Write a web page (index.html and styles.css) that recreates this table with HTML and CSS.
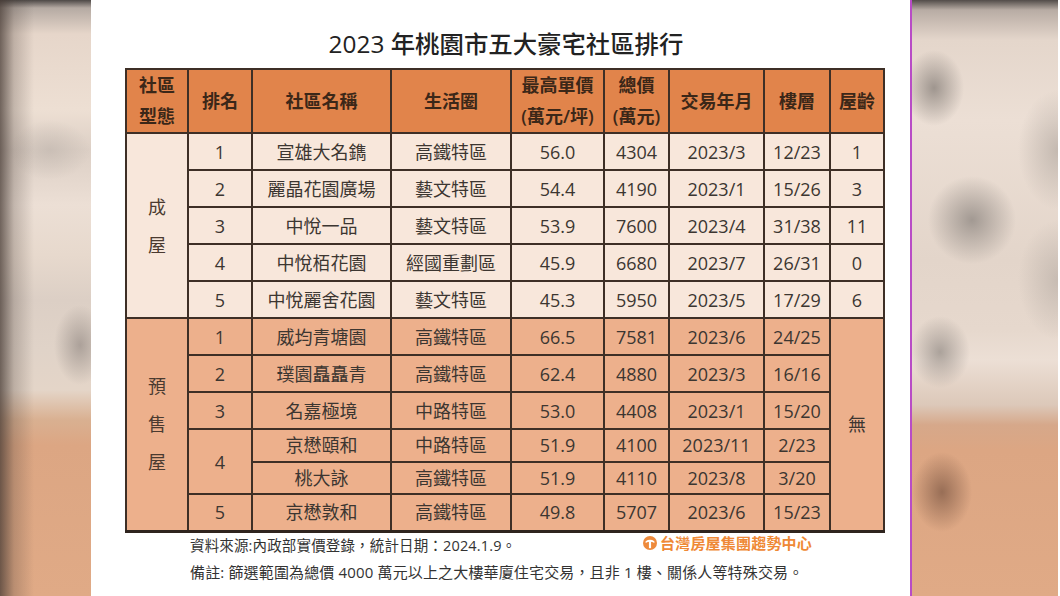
FILE: index.html
```html
<!DOCTYPE html>
<html lang="zh-Hant">
<head>
<meta charset="utf-8">
<title>2023 年桃園市五大豪宅社區排行</title>
<link rel="stylesheet" href="styles.css">
</head>
<body>
<div class="screen">
  <div class="side side-left"></div>
  <main class="panel">
    <h1 class="title">2023 年桃園市五大豪宅社區排行</h1>
    <table class="rank">
      <colgroup>
        <col class="c1"><col class="c2"><col class="c3"><col class="c4"><col class="c5"><col class="c6"><col class="c7"><col class="c8"><col class="c9">
      </colgroup>
      <thead>
        <tr class="head">
          <th>社區<br>型態</th>
          <th>排名</th>
          <th>社區名稱</th>
          <th>生活圈</th>
          <th>最高單價<br>(萬元/坪)</th>
          <th>總價<br>(萬元)</th>
          <th>交易年月</th>
          <th>樓層</th>
          <th>屋齡</th>
        </tr>
      </thead>
      <tbody class="built">
        <tr class="r">
          <td rowspan="5" class="type">成<br>屋</td>
          <td>1</td><td>宣雄大名鐫</td><td>高鐵特區</td><td>56.0</td><td>4304</td><td>2023/3</td><td>12/23</td><td>1</td>
        </tr>
        <tr class="r"><td>2</td><td>麗晶花園廣場</td><td>藝文特區</td><td>54.4</td><td>4190</td><td>2023/1</td><td>15/26</td><td>3</td></tr>
        <tr class="r"><td>3</td><td>中悅一品</td><td>藝文特區</td><td>53.9</td><td>7600</td><td>2023/4</td><td>31/38</td><td>11</td></tr>
        <tr class="r"><td>4</td><td>中悅栢花園</td><td>經國重劃區</td><td>45.9</td><td>6680</td><td>2023/7</td><td>26/31</td><td>0</td></tr>
        <tr class="r"><td>5</td><td>中悅麗舍花園</td><td>藝文特區</td><td>45.3</td><td>5950</td><td>2023/5</td><td>17/29</td><td>6</td></tr>
      </tbody>
      <tbody class="presale">
        <tr class="r">
          <td rowspan="6" class="type">預<br>售<br>屋</td>
          <td>1</td><td>威均青塘園</td><td>高鐵特區</td><td>66.5</td><td>7581</td><td>2023/6</td><td>24/25</td>
          <td rowspan="6" class="none">無</td>
        </tr>
        <tr class="r"><td>2</td><td>璞園矗矗青</td><td>高鐵特區</td><td>62.4</td><td>4880</td><td>2023/3</td><td>16/16</td></tr>
        <tr class="r"><td>3</td><td>名嘉極境</td><td>中路特區</td><td>53.0</td><td>4408</td><td>2023/1</td><td>15/20</td></tr>
        <tr class="sub"><td rowspan="2">4</td><td>京懋頤和</td><td>中路特區</td><td>51.9</td><td>4100</td><td>2023/11</td><td>2/23</td></tr>
        <tr class="sub"><td>桃大詠</td><td>高鐵特區</td><td>51.9</td><td>4110</td><td>2023/8</td><td>3/20</td></tr>
        <tr class="r last"><td>5</td><td>京懋敦和</td><td>高鐵特區</td><td>49.8</td><td>5707</td><td>2023/6</td><td>15/23</td></tr>
      </tbody>
    </table>
    <div class="notes">
      <div class="note-row">
        <p class="note note-source">資料來源:內政部實價登錄，統計日期：2024.1.9。</p>
        <div class="brand">
          <svg class="brand-icon" width="14" height="14" viewBox="0 0 17 17" aria-hidden="true">
            <circle cx="8.5" cy="8.5" r="8.5" fill="#ee8a3c"/>
            <path d="M3.2 6.4 Q8.5 3 13.8 6.4 L13.8 8.4 Q8.5 5.4 3.2 8.4 Z" fill="#fff"/>
            <rect x="7.2" y="6.2" width="2.6" height="8.6" fill="#fff"/>
          </svg>
          <span>台灣房屋集團趨勢中心</span>
        </div>
      </div>
      <p class="note note-remark">備註: 篩選範圍為總價 4000 萬元以上之大樓華廈住宅交易，且非 1 樓、關係人等特殊交易。</p>
    </div>
  </main>
  <div class="side side-right"></div>
</div>
</body>
</html>
```

FILE: styles.css
```css
html, body {
  margin: 0;
  padding: 0;
}

body {
  width: 1060px;
  height: 596px;
  overflow: hidden;
  font-family: "Open Sans", "Noto Sans CJK TC", sans-serif;
  color: #3a3531;
}

.screen {
  display: flex;
  width: 1060px;
  height: 596px;
}

.side {
  height: 596px;
  flex: none;
}

.side-left {
  width: 91px;
  background:
    linear-gradient(to right, rgba(70, 58, 52, 0.75) 0, rgba(70, 58, 52, 0.25) 14px, rgba(70, 58, 52, 0) 34px),
    radial-gradient(ellipse 26px 40px at 80px 345px, rgba(150, 140, 134, 0.7), rgba(150, 140, 134, 0)),
    radial-gradient(ellipse 40px 30px at 50px 150px, rgba(190, 180, 172, 0.6), rgba(190, 180, 172, 0)),
    linear-gradient(to bottom, #4d4846 0, #b5aaa3 8px, #e6d6ca 34px, #eddfd3 110px, #dccfc5 150px, #ecdfd5 205px, #e7d9cd 255px, #dccfc5 300px, #e0d3c8 350px, #e4d5c8 390px, #d9b091 420px, #dca683 445px, #e0aa86 596px);
}

.side-right {
  width: 146px;
  background:
    radial-gradient(ellipse 30px 38px at 22px 88px, rgba(140, 132, 126, 0.8), rgba(140, 132, 126, 0)),
    radial-gradient(ellipse 44px 44px at 60px 220px, rgba(150, 142, 136, 0.85), rgba(150, 142, 136, 0)),
    radial-gradient(ellipse 30px 36px at 28px 352px, rgba(150, 142, 136, 0.75), rgba(150, 142, 136, 0)),
    radial-gradient(ellipse 30px 40px at 30px 492px, rgba(140, 100, 78, 0.85), rgba(140, 100, 78, 0)),
    radial-gradient(ellipse 40px 60px at 146px 150px, rgba(180, 170, 162, 0.7), rgba(180, 170, 162, 0)),
    radial-gradient(ellipse 40px 60px at 146px 280px, rgba(180, 170, 162, 0.6), rgba(180, 170, 162, 0)),
    linear-gradient(to bottom, #524c49 0, #b8aca4 10px, #e4d6cb 40px, #ecdfd5 120px, #e3d5ca 260px, #e6d8cd 330px, #ecdfd5 360px, #dcc8b9 405px, #d6a88a 425px, #dca683 450px, #e0aa86 596px);
}

.panel {
  height: 596px;
  flex: none;
  background: #ffffff;
  border-right: 2px solid #b84cc6;
  box-shadow: 2px 0 0 #e7b9ea;
  padding-left: 34px;
  box-sizing: content-box;
  width: 785px;
}

.title {
  margin: 0;
  padding-top: 29px;
  height: 30px;
  line-height: 30px;
  font-size: 24.4px;
  font-weight: 500;
  color: #222;
  text-align: center;
  width: 762px;
}

.rank {
  margin-top: 9px;
  border-collapse: collapse;
  table-layout: fixed;
  width: 758px;
  font-size: 18px;
}

.c1 { width: 62px; }
.c2 { width: 64px; }
.c3 { width: 139px; }
.c4 { width: 120px; }
.c5 { width: 93px; }
.c6 { width: 65px; }
.c7 { width: 95px; }
.c8 { width: 66px; }
.c9 { width: 54px; }

.rank th,
.rank td {
  border: 2px solid #3e2f26;
  padding: 0;
  text-align: center;
  vertical-align: middle;
  white-space: nowrap;
}

.rank th {
  background: #e1844b;
  color: #3b2718;
  font-weight: 600;
  line-height: 31px;
}

.head {
  height: 64px;
}

.r {
  height: 37px;
}

.sub {
  height: 32.5px;
}

.built td {
  background: #f8e7db;
}

.presale td {
  background: #edb08c;
}

.rank td {
  color: #3c3631;
  line-height: 22px;
}

.rank td.type {
  line-height: 38px;
  color: #4a3a30;
}

.presale .last td,
.presale td.type,
.presale td.none {
  border-bottom: 3px solid #2f241e;
}

.notes {
  padding-left: 65px;
  width: 622px;
  padding-top: 0;
}

.note-row {
  display: flex;
  justify-content: space-between;
  align-items: flex-start;
}

.note {
  margin: 0;
  line-height: 26px;
  color: #333;
}

.note-source {
  font-size: 14.5px;
  letter-spacing: 0.15px;
}

.note-remark {
  font-size: 15px;
  letter-spacing: 0.15px;
}

.brand {
  display: flex;
  align-items: center;
  gap: 3px;
  color: #ef8936;
  font-weight: 700;
  font-size: 15px;
  letter-spacing: 0.2px;
  line-height: 20px;
  padding-top: 0;
}

.brand-icon {
  display: block;
}
```
